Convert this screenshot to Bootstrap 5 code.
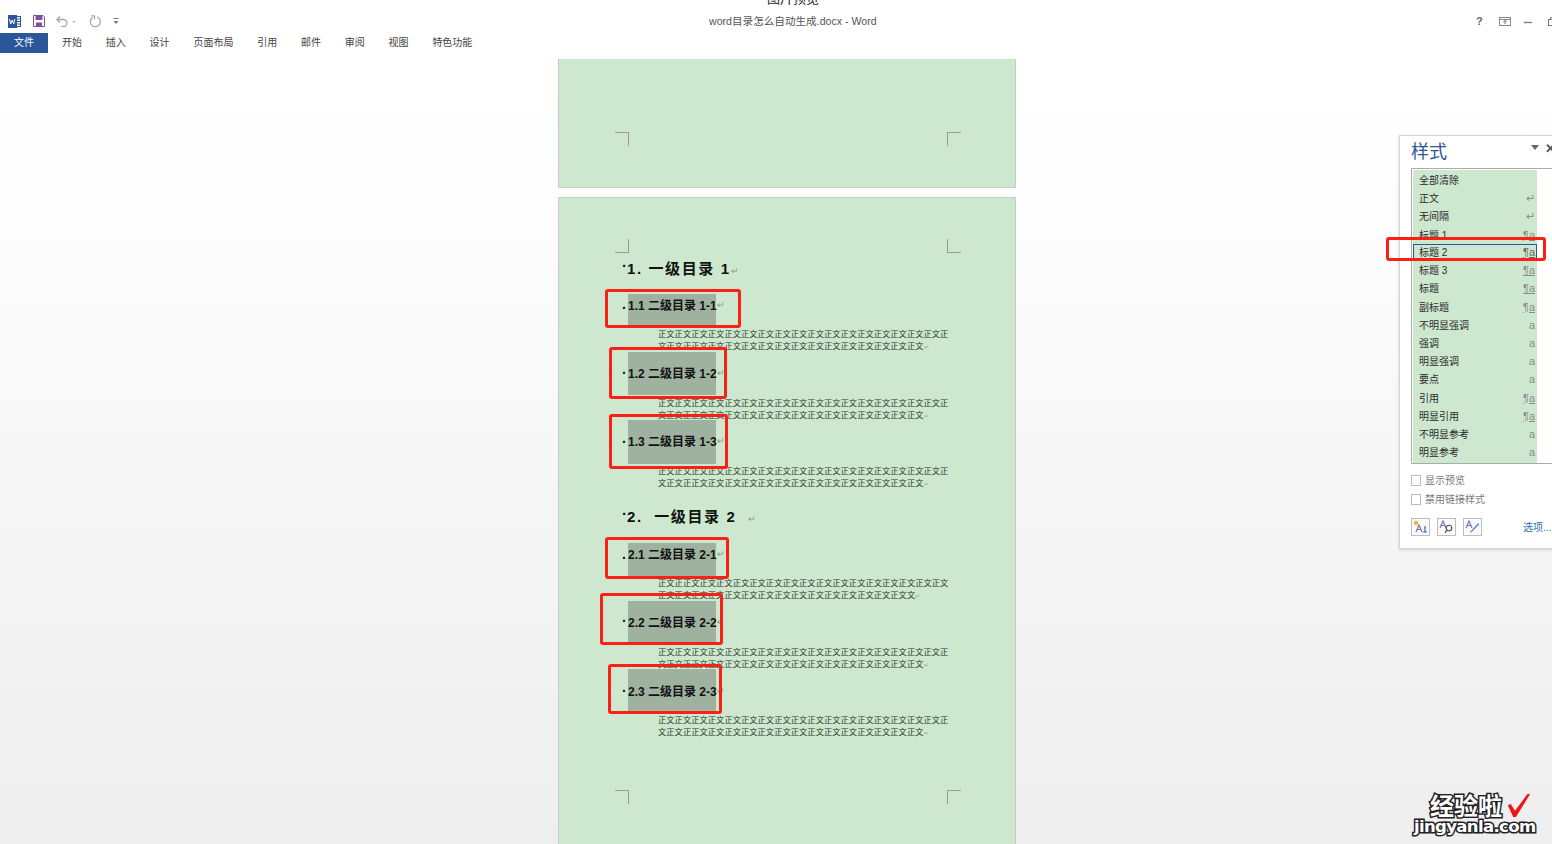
<!DOCTYPE html>
<html lang="zh-CN">
<head>
    <meta charset="UTF-8">
    <meta name="viewport" content="width=device-width, initial-scale=1.0">
    <title>word目录怎么自动生成.docx - Word</title>
    <link href="https://cdn.jsdelivr.net/npm/bootstrap@5.3.0/dist/css/bootstrap.min.css" rel="stylesheet">
    <style>
        html, body { height: 844px; overflow: hidden; }
        body {
            position: relative;
            font-family: "Liberation Sans", "Noto Sans CJK SC", sans-serif;
            background: linear-gradient(#fff 60px, #fdfdfd 200px, #eee 844px);
            color: #333;
        }

        /* title bar */
        .clipped-title { position: absolute; top: -11px; left: 767px; font-size: 13px; color: #222; }
        .title-bar { height: 33px; padding: 11px 0 0 8px; position: relative; }
        .qa-tools { gap: 11.5px; height: 20px; }
        .doc-name { position: absolute; left: 709px; top: 14px; font-size: 10.6px; color: #555; white-space: nowrap; }
        .win-tools { position: absolute; top: 14px; left: 1476px; gap: 13px; height: 14px; }
        .win-help { font-size: 11px; font-weight: 700; color: #666; line-height: 14px; width: 10px; }
        .win-restore { margin-left: 3px; }

        /* ribbon tabs */
        .ribbon-tabs { height: 26px; font-size: 10px; color: #444; }
        .tab-file { width: 48px; height: 20px; line-height: 20px; text-align: center; background: #2b579a; color: #fff; margin-right: 14px; }
        .tab-plain { height: 20px; line-height: 20px; margin-right: 23.8px; }

        /* document pages */
        .doc-area { padding-left: 22px; }
        .doc-page {
            width: 458px;
            background: #cde8cf;
            border: 1px solid #c6cfc7;
            position: relative;
            color: #111;
        }
        .page-end { height: 129px; border-top: 0; margin-bottom: 9px; }
        .page-main { height: 700px; padding: 59px 0 0 63px; }
        .crop-mark { position: absolute; width: 14px; height: 14px; border: 0 solid #9a9a9a; }
        .crop-tl { border-right-width: 1px; border-bottom-width: 1px; }
        .crop-tr { border-left-width: 1px; border-bottom-width: 1px; }
        .crop-bl { border-right-width: 1px; border-top-width: 1px; }
        .crop-br { border-left-width: 1px; border-top-width: 1px; }
        .pos-a { left: 56px; }
        .pos-b { left: 388px; }
        .end-y { top: 73px; }
        .main-top { top: 41px; }
        .main-bot { top: 592px; }

        .level-one { height: 24px; line-height: 24px; font-size: 15px; font-weight: 700; letter-spacing: 1.6px; white-space: nowrap; }
        .level-one-b { margin-top: 16px; }
        .dot { font-weight: 700; }
        .level-one .dot { letter-spacing: 0; position: relative; top: -3px; }
        .para-mark { color: #8a9a8b; font-weight: 400; font-size: 9px; letter-spacing: 0; }

        .level-two { display: flex; align-items: center; margin-left: 0; }
        .level-two .dot { width: 6px; font-size: 14px; }
        .level-two .dot-low { margin-top: 10px; }
        .level-box { width: 88px; background: #9fb2a0; display: flex; align-items: center; font-size: 12px; font-weight: 700; white-space: nowrap; }
        .level-box .para-mark { margin-right: -9px; }
        .h-32 { height: 32px; margin-top: 13px; padding-bottom: 8px; }
        .h-34 { height: 34px; margin-top: 14px; padding-bottom: 10px; }
        .h-41 { height: 41px; padding-top: 3px; }
        .h-43 { height: 43px; padding-top: 1px; }
        .h-44 { height: 44px; margin-top: -1px; }
        .h-43b { height: 43px; margin-top: -1px; padding-top: 3px; }

        .body-text {
            margin: 0 0 0 36px;
            font-size: 8.3px;
            line-height: 12px;
            height: 24px;
            white-space: nowrap;
            color: #263628;
        }
        .text-line { height: 12px; }
        .gap-2px { margin-top: 2px; }
        .gap-4px { margin-top: 4px; }
        .gap-1px { margin-top: 1px; }
        .end-mark { color: #9aa89b; font-size: 6px; }

        /* red annotation boxes */
        .red-box { position: absolute; border: 3px solid #fb2016; border-radius: 3px; }
        .rb-1 { left: 605px; top: 289px; width: 136px; height: 39px; }
        .rb-2 { left: 609px; top: 347px; width: 118px; height: 52px; }
        .rb-3 { left: 609px; top: 414px; width: 119px; height: 55px; }
        .rb-4 { left: 605px; top: 537px; width: 124px; height: 42px; }
        .rb-5 { left: 600px; top: 593px; width: 123px; height: 52px; }
        .rb-6 { left: 608px; top: 664px; width: 114px; height: 50px; }
        .rb-7 { left: 1386px; top: 237px; width: 160px; height: 24px; }

        /* styles pane */
        .styles-pane {
            position: absolute;
            left: 1399px;
            top: 135px;
            width: 170px;
            height: 414px;
            background: #fff;
            border: 1px solid #d4d4d4;
            box-shadow: 0 1px 3px rgba(0, 0, 0, .15);
            padding: 0 0 0 11px;
        }
        .pane-head { height: 32px; position: relative; }
        .pane-title { font-size: 18px; line-height: 32px; color: #2b579a; }
        .pane-arrow { position: absolute; left: 120px; top: 9px; width: 0; height: 0; border: 4px solid transparent; border-top: 5px solid #666; }
        .pane-close { position: absolute; left: 134px; top: 3px; font-size: 13px; color: #555; font-weight: 700; }
        .style-list { width: 170px; height: 296px; border: 1px solid #ababab; padding: 1px; border-right: 0; background: #fff; }
        .style-rows { width: 124px; height: 293px; background: #cde8cf; padding-top: 1px; }
        .style-row { height: 18.2px; line-height: 19px; font-size: 10px; color: #2b2b2b; padding: 0 2px 0 6px; display: flex; justify-content: space-between; }
        .style-row span:last-child { color: #8a8a8a; font-size: 11px; }
        .para-style span:last-child { text-decoration: underline; }
        .style-row.current { border: 1px solid #2b579a; padding: 0 1px 0 5px; line-height: 15px; height: 17.5px; }
        .style-row.current span:last-child { text-decoration: underline; color: #666; }
        .pane-check { height: 19px; gap: 4px; font-size: 10px; color: #7a7a7a; }
        .check-first { margin-top: 7px; }
        .check-square { width: 10px; height: 11px; border: 1px solid #bbb; background: #fff; }
        .pane-tools { margin-top: 9px; height: 19px; }
        .tool-btn { width: 19px; height: 18px; border: 1px solid #bdbdbd; background: #fafafa; margin-right: 7px; display: flex; align-items: center; justify-content: center; }
        .pane-options { font-size: 10px; color: #2b6cb0; margin-left: 34px; white-space: nowrap; line-height: 19px; }

        /* watermark */
        .mark-cn { position: absolute; left: 1430px; top: 792px; font-size: 24px; line-height: 30px; font-weight: 700; color: #fff; -webkit-text-stroke: 3px #222; paint-order: stroke fill; white-space: nowrap; }
        .mark-en { position: absolute; left: 1414px; top: 815px; font-size: 16.5px; line-height: 24px; font-weight: 700; color: #fff; -webkit-text-stroke: 3px #222; paint-order: stroke fill; white-space: nowrap; font-family: "DejaVu Sans", sans-serif; letter-spacing: -.65px; }
        .mark-tick { position: absolute; left: 1507px; top: 793px; }
    </style>
</head>
<body>

    <div class="clipped-title">图片预览</div>

    <!-- Title bar -->
    <div class="title-bar">
        <div class="qa-tools d-flex align-items-center">
            <svg width="13" height="13" viewBox="0 0 13 13"><rect x="6" y="1.500" width="6.500" height="10" fill="#fff" stroke="#2b579a"/><path d="M9 4h3M9 6.500h3M9 9h3" stroke="#2b579a"/><rect y="0" width="9" height="13" fill="#2b579a"/><path d="M1.500 4l1.200 5 1.500-4 1.500 4 1.200-5" fill="none" stroke="#fff"/></svg>
            <svg width="12" height="12" viewBox="0 0 12 12"><path d="M.5.5h9.500l1.500 1.500v9.500H.5z" fill="#fff" stroke="#80509f"/><rect x="2.500" y="1" width="7" height="4" fill="#80509f"/><rect x="3" y="7.500" width="6" height="4" fill="#80509f"/></svg>
            <svg width="21" height="12" viewBox="0 0 21 12"><path d="M1 4.500h6.500a3.500 3.500 0 0 1 0 7H5M4 1.500 1 4.500l3 3" fill="none" stroke="#a8a8a8" stroke-width="1.300"/><path d="M16 6h4l-2 2z" fill="#bbb"/></svg>
            <svg width="13" height="13" viewBox="0 0 13 13"><path d="M8 2a5 5 0 1 1-4.500 .6" fill="none" stroke="#a8a8a8" stroke-width="1.300"/><path d="M2 .8h3.500v3.500" fill="none" stroke="#a8a8a8" stroke-width="1.300"/></svg>
            <svg width="6" height="8" viewBox="0 0 6 8"><path d="M.5 1.500h5" stroke="#777"/><path d="M.5 4h5l-2.500 3z" fill="#777"/></svg>
        </div>
        <div class="doc-name">word目录怎么自动生成.docx - Word</div>
        <div class="win-tools d-flex align-items-center">
            <span class="win-help">?</span>
            <svg width="12" height="9" viewBox="0 0 12 9"><rect x=".5" y=".5" width="11" height="8" fill="none" stroke="#888"/><path d="M1 2.500h10" stroke="#888"/><path d="M6 3.500v3.500M4.300 5 6 3.500 7.700 5" fill="none" stroke="#777"/></svg>
            <svg width="8" height="8" viewBox="0 0 8 8"><path d="M0 5.500h8" stroke="#777" stroke-width="1.300"/></svg>
            <svg class="win-restore" width="9" height="9" viewBox="0 0 9 9"><rect x=".5" y="2.500" width="6" height="6" fill="none" stroke="#777"/><path d="M2.500 2.500V.5h6v6h-2" fill="none" stroke="#777"/></svg>
        </div>
    </div>

    <!-- Ribbon tabs -->
    <div class="ribbon-tabs d-flex">
        <div class="tab-file">文件</div>
        <div class="tab-plain">开始</div>
        <div class="tab-plain">插入</div>
        <div class="tab-plain">设计</div>
        <div class="tab-plain">页面布局</div>
        <div class="tab-plain">引用</div>
        <div class="tab-plain">邮件</div>
        <div class="tab-plain">审阅</div>
        <div class="tab-plain">视图</div>
        <div class="tab-plain">特色功能</div>
    </div>

    <!-- Document -->
    <div class="doc-area d-flex flex-column align-items-center">
        <div class="doc-page page-end">
            <div class="crop-mark crop-bl pos-a end-y"></div>
            <div class="crop-mark crop-br pos-b end-y"></div>
        </div>

        <div class="doc-page page-main">
            <div class="crop-mark crop-tl pos-a main-top"></div>
            <div class="crop-mark crop-tr pos-b main-top"></div>
            <div class="crop-mark crop-bl pos-a main-bot"></div>
            <div class="crop-mark crop-br pos-b main-bot"></div>

            <div class="level-one"><span class="dot">·</span>1. 一级目录 1<span class="para-mark">↵</span></div>

            <div class="level-two"><span class="dot dot-low">·</span><div class="level-box h-32">1.1 二级目录 1-1<span class="para-mark">↵</span></div></div>
            <div class="body-text gap-2px"><div class="text-line">正文正文正文正文正文正文正文正文正文正文正文正文正文正文正文正文正文正</div><div class="text-line">文正文正正文正文正文正文正文正文正文正文正文正文正文正文正文正文<span class="end-mark">↵</span></div></div>

            <div class="level-two"><span class="dot">·</span><div class="level-box h-43">1.2 二级目录 1-2<span class="para-mark">↵</span></div></div>
            <div class="body-text gap-2px"><div class="text-line">正文正文正文正文正文正文正文正文正文正文正文正文正文正文正文正文正文正</div><div class="text-line">文正文正正文正文正文正文正文正文正文正文正文正文正文正文正文正文<span class="end-mark">↵</span></div></div>

            <div class="level-two"><span class="dot">·</span><div class="level-box h-44">1.3 二级目录 1-3<span class="para-mark">↵</span></div></div>
            <div class="body-text gap-1px"><div class="text-line">正文正文正文正文正文正文正文正文正文正文正文正文正文正文正文正文正文正</div><div class="text-line">文正文正正文正文正文正文正文正文正文正文正文正文正文正文正文正文<span class="end-mark">↵</span></div></div>

            <div class="level-one level-one-b"><span class="dot">·</span>2.&nbsp; 一级目录 2 &nbsp;<span class="para-mark">↵</span></div>

            <div class="level-two"><span class="dot dot-low">·</span><div class="level-box h-34">2.1 二级目录 2-1<span class="para-mark">↵</span></div></div>
            <div class="body-text"><div class="text-line">正文正正文正文正文正文正文正文正文正文正文正文正文正文正文正文正文正文</div><div class="text-line">正文正文正文正文正文正文正文正文正文正文正文正文正文正文正文文<span class="end-mark">↵</span></div></div>

            <div class="level-two"><span class="dot">·</span><div class="level-box h-41">2.2 二级目录 2-2<span class="para-mark">↵</span></div></div>
            <div class="body-text gap-4px"><div class="text-line">正文正文正文正文正文正文正文正文正文正文正文正文正文正文正文正文正文正</div><div class="text-line">文正文正正文正文正文正文正文正文正文正文正文正文正文正文正文正文<span class="end-mark">↵</span></div></div>

            <div class="level-two"><span class="dot">·</span><div class="level-box h-43b">2.3 二级目录 2-3<span class="para-mark">↵</span></div></div>
            <div class="body-text gap-2px"><div class="text-line">正文正文正文正文正文正文正文正文正文正文正文正文正文正文正文正文正文正</div><div class="text-line">文正文正正文正文正文正文正文正文正文正文正文正文正文正文正文正文<span class="end-mark">↵</span></div></div>
        </div>
    </div>

    <!-- Styles pane, floats over the window -->
    <div class="styles-pane">
        <div class="pane-head">
            <div class="pane-title">样式</div>
            <span class="pane-arrow"></span>
            <span class="pane-close">✕</span>
        </div>
        <div class="style-list">
            <div class="style-rows">
                <div class="style-row"><span>全部清除</span><span></span></div>
                <div class="style-row"><span>正文</span><span>↵</span></div>
                <div class="style-row"><span>无间隔</span><span>↵</span></div>
                <div class="style-row para-style"><span>标题 1</span><span>¶a</span></div>
                <div class="style-row current"><span>标题 2</span><span>¶a</span></div>
                <div class="style-row para-style"><span>标题 3</span><span>¶a</span></div>
                <div class="style-row para-style"><span>标题</span><span>¶a</span></div>
                <div class="style-row para-style"><span>副标题</span><span>¶a</span></div>
                <div class="style-row"><span>不明显强调</span><span>a</span></div>
                <div class="style-row"><span>强调</span><span>a</span></div>
                <div class="style-row"><span>明显强调</span><span>a</span></div>
                <div class="style-row"><span>要点</span><span>a</span></div>
                <div class="style-row para-style"><span>引用</span><span>¶a</span></div>
                <div class="style-row para-style"><span>明显引用</span><span>¶a</span></div>
                <div class="style-row"><span>不明显参考</span><span>a</span></div>
                <div class="style-row"><span>明显参考</span><span>a</span></div>
            </div>
        </div>
        <div class="pane-check check-first d-flex align-items-center"><span class="check-square"></span>显示预览</div>
        <div class="pane-check d-flex align-items-center"><span class="check-square"></span>禁用链接样式</div>
        <div class="pane-tools d-flex">
            <div class="tool-btn"><svg width="15" height="14" viewBox="0 0 15 14"><circle cx="3" cy="3" r="2.200" fill="#e8b93c"/><path d="M3 12 6 5l3 7M4 9.500h4" fill="none" stroke="#8a63b5" stroke-width="1.100"/><path d="M12 6v6M10 12h4" stroke="#2b6cb0" stroke-width="1.200"/></svg></div>
            <div class="tool-btn"><svg width="15" height="14" viewBox="0 0 15 14"><path d="M1 8 4 1l3 7M2 5.500h4" fill="none" stroke="#8a63b5" stroke-width="1.100"/><circle cx="10" cy="8" r="2.800" fill="none" stroke="#555" stroke-width="1.100"/><path d="M8 10.200l-2 2.600" stroke="#555" stroke-width="1.300"/></svg></div>
            <div class="tool-btn"><svg width="15" height="14" viewBox="0 0 15 14"><path d="M1 8 4 1l3 7M2 5.500h4" fill="none" stroke="#8a63b5" stroke-width="1.100"/><path d="M13.500 3 6 11l-1.500 2 2.200-1L14 4.500z" fill="#3f83c9"/></svg></div>
            <div class="pane-options">选项...</div>
        </div>
    </div>

    <!-- Red annotation boxes -->
    <div class="red-box rb-1"></div>
    <div class="red-box rb-2"></div>
    <div class="red-box rb-3"></div>
    <div class="red-box rb-4"></div>
    <div class="red-box rb-5"></div>
    <div class="red-box rb-6"></div>
    <div class="red-box rb-7"></div>

    <!-- Watermark -->
    <div class="mark-cn">经验啦</div>
    <svg class="mark-tick" width="24" height="25" viewBox="0 0 27 28"><path d="M1 14 4 12 9 20 23 1h3L10 27H7z" fill="#f01414"/></svg>
    <div class="mark-en">jingyanla.com</div>

<script src="https://cdn.jsdelivr.net/npm/bootstrap@5.3.0/dist/js/bootstrap.bundle.min.js"></script>
</body>
</html>
